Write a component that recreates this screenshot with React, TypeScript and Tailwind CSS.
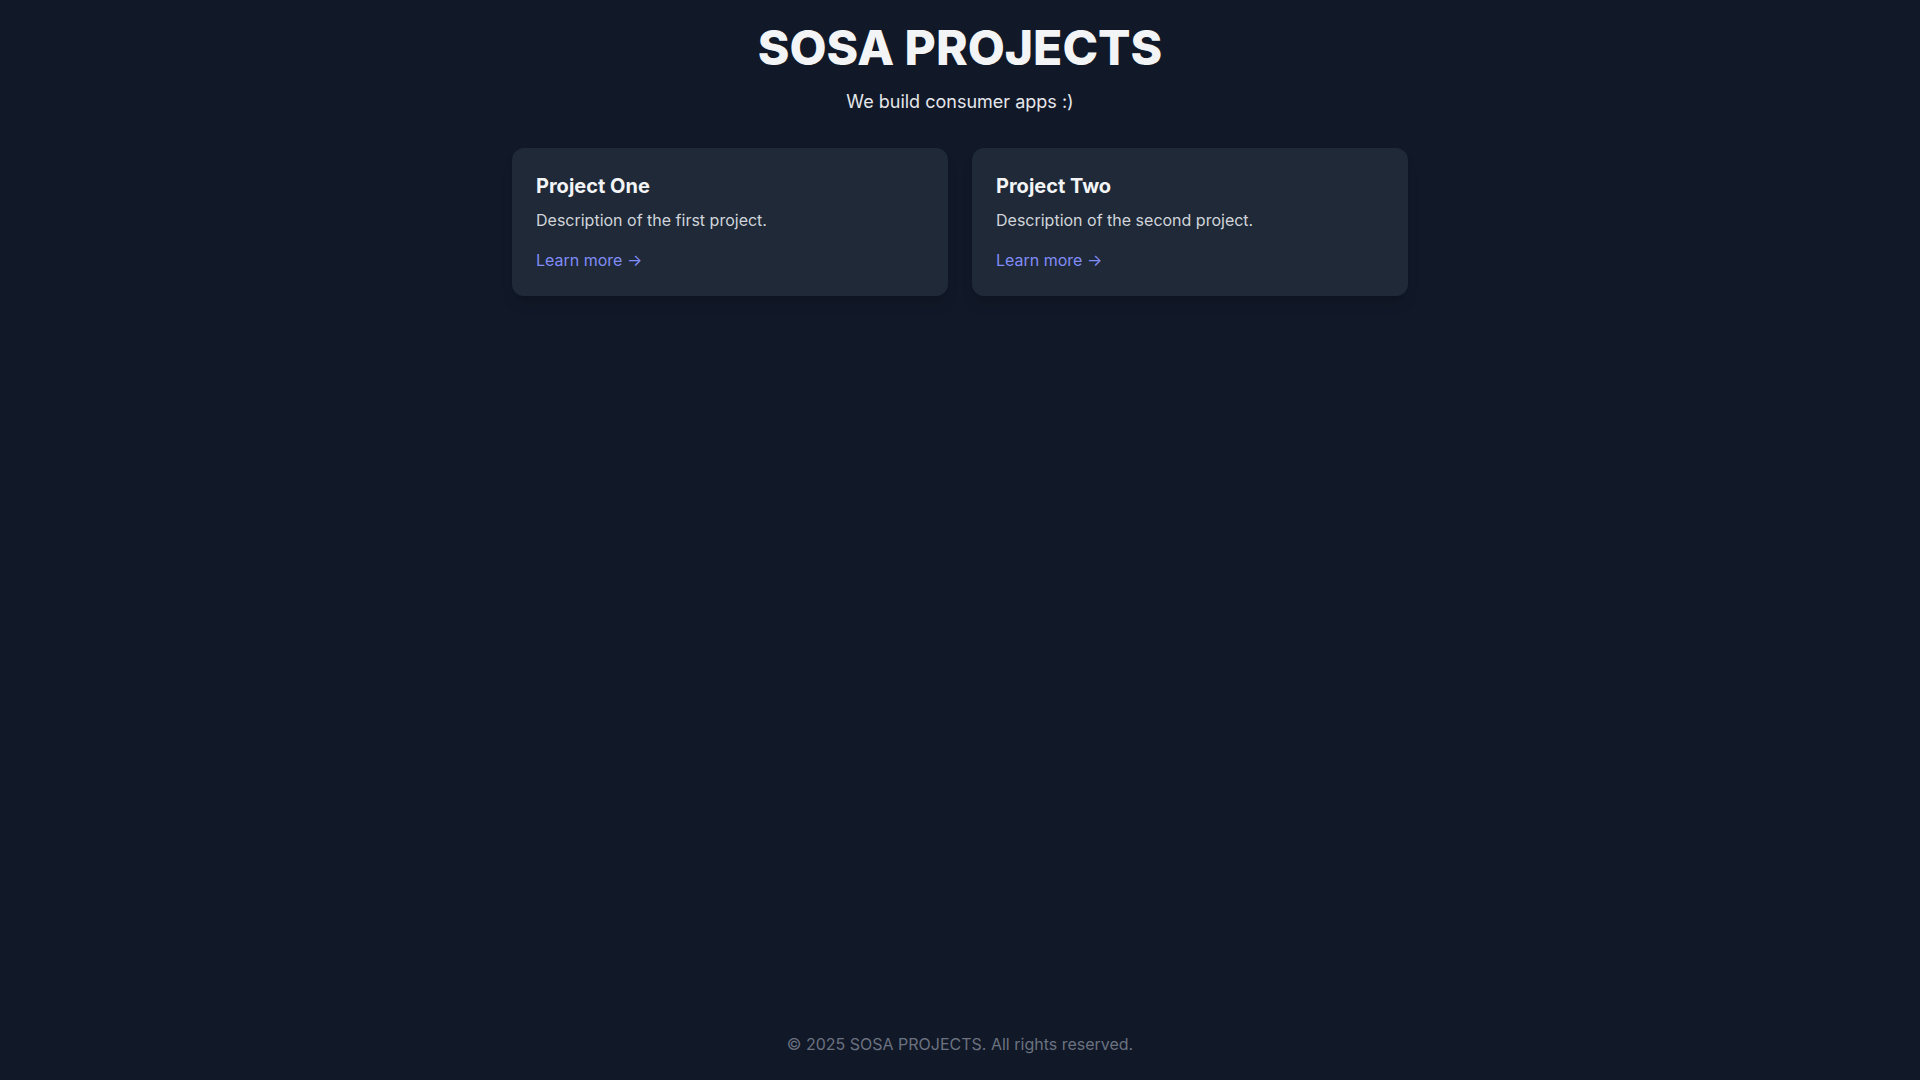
import React from "react";

interface Project {
  title: string;
  description: string;
}

const projects: Project[] = [
  { title: "Project One", description: "Description of the first project." },
  { title: "Project Two", description: "Description of the second project." },
];

export default function App() {
  return (
    <div
      className="min-h-screen bg-[#111827] text-gray-100 flex flex-col p-6"
      style={{ fontFamily: "Inter, 'Noto Sans', sans-serif" }}
    >
      <header className="text-center mb-8">
        <h1 className="text-5xl font-extrabold text-[#f3f4f6]">SOSA PROJECTS</h1>
        <p className="mt-4 text-lg text-[#e5e7eb]">We build consumer apps :)</p>
      </header>

      <main className="flex-1">
        <div className="max-w-4xl mx-auto grid grid-cols-2 gap-6">
          {projects.map((project) => (
            <div key={project.title} className="bg-[#1f2937] rounded-xl shadow-lg p-6">
              <h2 className="text-xl font-bold text-[#f3f4f6] mb-2">{project.title}</h2>
              <p className="text-[#d1d5db]">{project.description}</p>
              <a href="#" className="inline-block mt-4 text-[#818cf8] hover:text-indigo-300">
                Learn more →
              </a>
            </div>
          ))}
        </div>
      </main>

      <footer className="text-center text-[#6b7280]">
        © 2025 SOSA PROJECTS. All rights reserved.
      </footer>
    </div>
  );
}
